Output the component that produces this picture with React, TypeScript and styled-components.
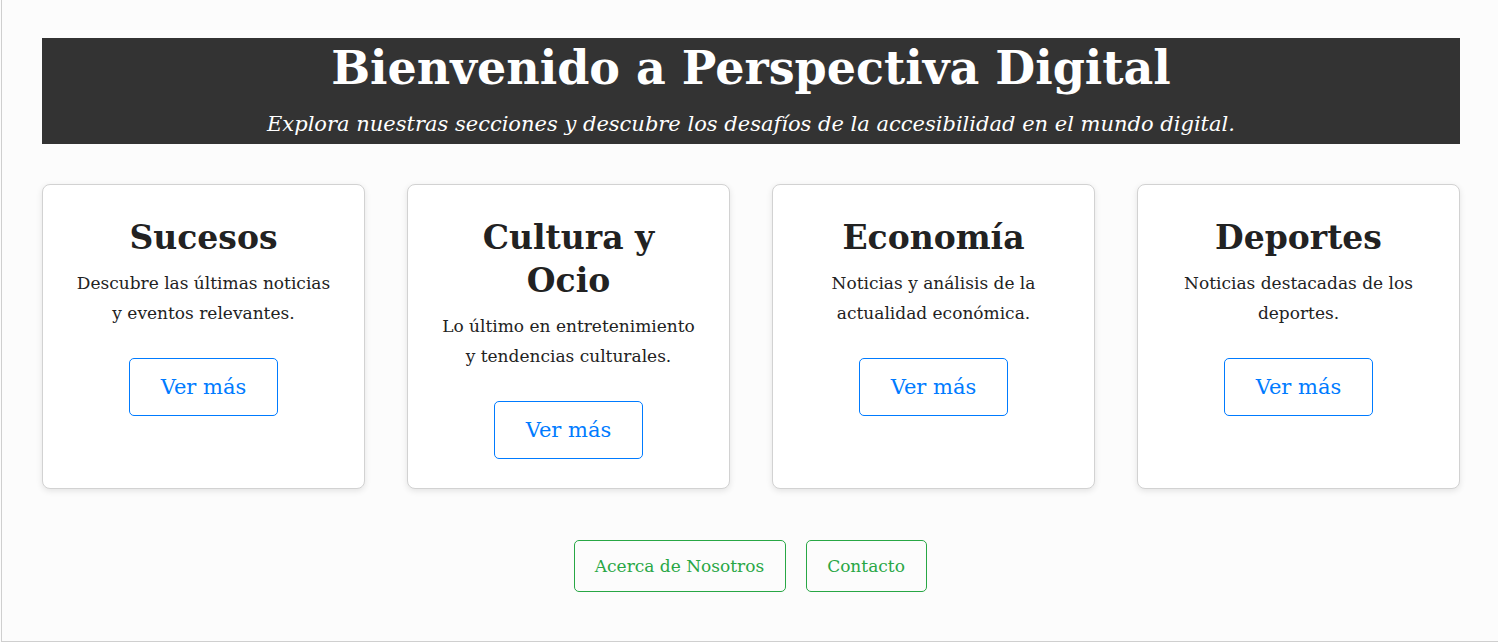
import React from "react";
import styled, { createGlobalStyle } from "styled-components";

const Global = createGlobalStyle`
  html, body { margin: 0; padding: 0; }
  body {
    background: #fcfcfc;
    overflow: hidden;
    font-family: "DejaVu Serif", "Liberation Serif", serif;
    color: #222;
  }
`;

const Page = styled.div`
  box-sizing: border-box;
  width: 1499px;
  height: 642px;
  margin-left: 1px;
  border-left: 1px solid #cfcfcf;
  border-bottom: 1px solid #cfcfcf;
  padding: 38px 40px 0 40px;
`;

const Header = styled.header`
  background: #333;
  color: #fff;
  text-align: center;
  height: 106px;
  display: flex;
  flex-direction: column;
  align-items: center;
`;

const Title = styled.h1`
  margin: 0;
  padding-top: 2px;
  font-size: 46px;
  line-height: 56px;
  font-weight: bold;
`;

const Subtitle = styled.p`
  margin: 0;
  margin-top: 13px;
  font-size: 21px;
  line-height: 30px;
  font-style: italic;
`;

const Cards = styled.section`
  display: grid;
  grid-template-columns: repeat(4, 1fr);
  gap: 42px;
  margin-top: 40px;
`;

const Card = styled.article`
  box-sizing: border-box;
  height: 305px;
  background: #fff;
  border: 1px solid #d2d2d2;
  border-radius: 8px;
  box-shadow: 0 2px 6px rgba(0, 0, 0, 0.1);
  padding: 31px 30px 20px;
  text-align: center;
  display: flex;
  flex-direction: column;
  align-items: center;
`;

const CardTitle = styled.h2`
  margin: 0;
  font-size: 33px;
  line-height: 43px;
  font-weight: bold;
  color: #222;
`;

const CardText = styled.p`
  margin: 9px 0 0;
  font-size: 17px;
  line-height: 30px;
  color: #222;
`;

const MoreButton = styled.a`
  box-sizing: border-box;
  display: flex;
  align-items: center;
  justify-content: center;
  margin-top: 30px;
  width: 149px;
  height: 58px;
  border: 1px solid #007bff;
  border-radius: 5px;
  color: #007bff;
  font-size: 21px;
  text-decoration: none;
`;

const Footer = styled.nav`
  display: flex;
  justify-content: center;
  gap: 20px;
  margin-top: 51px;
  padding-right: 2px;
`;

const FooterButton = styled.a<{ $w: number }>`
  box-sizing: border-box;
  display: flex;
  align-items: center;
  justify-content: center;
  width: ${(p) => p.$w}px;
  height: 52px;
  border: 1px solid #28a745;
  border-radius: 5px;
  color: #28a745;
  font-size: 17px;
  text-decoration: none;
`;

const sections = [
  { title: "Sucesos", text: "Descubre las últimas noticias y eventos relevantes." },
  { title: "Cultura y Ocio", text: "Lo último en entretenimiento y tendencias culturales." },
  { title: "Economía", text: "Noticias y análisis de la actualidad económica." },
  { title: "Deportes", text: "Noticias destacadas de los deportes." },
];

export default function App() {
  return (
    <>
      <Global />
      <Page>
        <Header>
          <Title>Bienvenido a Perspectiva Digital</Title>
          <Subtitle>
            Explora nuestras secciones y descubre los desafíos de la accesibilidad en el mundo digital.
          </Subtitle>
        </Header>
        <Cards>
          {sections.map((s) => (
            <Card key={s.title}>
              <CardTitle>{s.title}</CardTitle>
              <CardText>{s.text}</CardText>
              <MoreButton href="#">Ver más</MoreButton>
            </Card>
          ))}
        </Cards>
        <Footer>
          <FooterButton href="#" $w={212}>Acerca de Nosotros</FooterButton>
          <FooterButton href="#" $w={121}>Contacto</FooterButton>
        </Footer>
      </Page>
    </>
  );
}
